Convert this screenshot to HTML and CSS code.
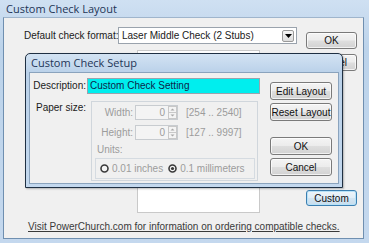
FILE: index.html
```html
<!DOCTYPE html>
<html>
<head>
<meta charset="utf-8">
<link rel="stylesheet" href="styles.css">
</head>
<body>
<div class="window">
  <div class="titlebar">Custom Check Layout</div>
  <div class="client">
    <div class="main">
      <div class="left">
        <div class="format-row">
          <span class="format-label">Default check format:</span>
          <div class="combo">
            <span class="combo-text">Laser Middle Check (2 Stubs)</span>
            <span class="drop"><svg width="7" height="4" viewBox="0 0 7 4"><path d="M0 0H7L3.5 4Z" fill="#000"/></svg></span>
          </div>
        </div>
        <div class="preview"></div>
      </div>
      <div class="right">
        <button class="btn btn-ok">OK</button>
        <button class="btn btn-cancel">Cancel</button>
        <button class="btn btn-focus btn-custom">Custom</button>
      </div>
    </div>
    <a class="link">Visit PowerChurch.com for information on ordering compatible checks.</a>
  </div>

  <div class="dialog">
    <div class="dlg-title">Custom Check Setup</div>
    <div class="dlg-body">
      <div class="form">
        <span class="lbl lbl-desc">Description:</span>
        <div class="desc-field">Custom Check Setting</div>
        <span class="lbl lbl-paper">Paper size:</span>
        <div class="paper">
          <div class="prow">
            <span class="plbl">Width:</span>
            <div class="spin"><span class="spin-val">0</span><span class="spin-btns"><svg width="9" height="13" viewBox="0 0 9 13"><rect x="0.5" y="0.5" width="8" height="12" fill="#f4f4f4" stroke="#c8c8c8"/><line x1="1" y1="6.5" x2="8" y2="6.5" stroke="#c8c8c8"/><path d="M2.5 4.5H6.5L4.5 2.5Z" fill="#a8a8a8"/><path d="M2.5 8.5H6.5L4.5 10.5Z" fill="#a8a8a8"/></svg></span></div>
            <span class="range">[254 .. 2540]</span>
          </div>
          <div class="prow">
            <span class="plbl">Height:</span>
            <div class="spin"><span class="spin-val">0</span><span class="spin-btns"><svg width="9" height="13" viewBox="0 0 9 13"><rect x="0.5" y="0.5" width="8" height="12" fill="#f4f4f4" stroke="#c8c8c8"/><line x1="1" y1="6.5" x2="8" y2="6.5" stroke="#c8c8c8"/><path d="M2.5 4.5H6.5L4.5 2.5Z" fill="#a8a8a8"/><path d="M2.5 8.5H6.5L4.5 10.5Z" fill="#a8a8a8"/></svg></span></div>
            <span class="range">[127 .. 9997]</span>
          </div>
          <span class="units-lbl">Units:</span>
          <div class="units">
            <span class="radio"><svg width="9" height="9" viewBox="0 0 9 9"><circle cx="4.5" cy="4.5" r="3.5" fill="#f4f4f4" stroke="#3a3a3a" stroke-width="1.6"/></svg>0.01 inches</span>
            <span class="radio"><svg width="9" height="9" viewBox="0 0 9 9"><circle cx="4.5" cy="4.5" r="3.5" fill="#f4f4f4" stroke="#3a3a3a" stroke-width="1.6"/><circle cx="4.5" cy="4.5" r="1.6" fill="#3a3a3a"/></svg>0.1 millimeters</span>
          </div>
        </div>
      </div>
      <div class="dlg-buttons">
        <button class="btn">Edit Layout</button>
        <button class="btn">Reset Layout</button>
        <button class="btn btn-dok">OK</button>
        <button class="btn">Cancel</button>
      </div>
    </div>
  </div>
</div>
</body>
</html>
```

FILE: styles.css
```css
* { box-sizing: border-box; }
html, body { margin: 0; padding: 0; }
body {
  width: 369px;
  height: 243px;
  overflow: hidden;
  font-family: "Liberation Sans", Arial, sans-serif;
  font-size: 10px;
  color: #1a1a1a;
}
.window {
  position: relative;
  width: 369px;
  height: 243px;
  background: linear-gradient(#cfe0f2, #bcd3ea 20%, #c4d8ee);
  padding: 0 5px 4px 3px;
  display: flex;
  flex-direction: column;
}
.titlebar {
  height: 17px;
  line-height: 17px;
  padding-left: 3px;
  font-family: "Open Sans", "Noto Sans", sans-serif;
  font-size: 11px;
  font-weight: 500;
  color: #1e3556;
}
.client {
  flex: 1;
  background: #f0f0f0;
  border: 1px solid #6f8fb0;
  border-top-color: #9fb5cc;
  padding: 9px 5px 0 20px;
  display: flex;
  flex-direction: column;
}
.main { display: flex; gap: 9px; }
.left { width: 273px; display: flex; flex-direction: column; }
.format-row { display: flex; align-items: center; height: 17px; }
.format-label { width: 94px; white-space: nowrap; }
.combo {
  width: 179px;
  height: 17px;
  background: #fff;
  border: 1px solid #9aa3ad;
  display: flex;
  align-items: center;
  justify-content: space-between;
  padding: 0 2px 0 3px;
}
.combo-text { white-space: nowrap; }
.drop {
  width: 12px;
  height: 12px;
  border: 1px solid #9a9a9a;
  border-radius: 2px;
  background: linear-gradient(#f6f6f6, #dcdcdc);
  display: flex;
  align-items: center;
  justify-content: center;
}
.preview {
  margin: 6px 0 0 113px;
  width: 123px;
  height: 163px;
  background: #fff;
  border: 1px solid #c9c9c9;
}
.right { width: 51px; display: flex; flex-direction: column; padding-top: 5px; }
.btn {
  font-family: "Liberation Sans", Arial, sans-serif;
  font-size: 10px;
  color: #111;
  border: 1px solid #7a7a7a;
  border-radius: 3px;
  background: linear-gradient(#f4f4f4, #ececec 48%, #dedede 52%, #d2d2d2);
  padding: 0;
  height: 17px;
  box-shadow: inset 0 0 0 1px rgba(255,255,255,0.7);
}
.btn-cancel { margin-top: 5px; }
.btn-custom { margin-top: 119px; height: 16px; }
.btn-focus {
  border-color: #3c7fb1;
  background: linear-gradient(#eef5fa, #e2eef7 48%, #d3e5f2 52%, #c8dded);
  box-shadow: inset 0 0 0 1px #b8e2f8;
}
.link {
  margin: 8px 0 0 4px;
  line-height: 12px;
  color: #3a3a3a;
  text-decoration: underline;
  white-space: nowrap;
}

/* dialog */
.dialog {
  position: absolute;
  left: 25px;
  top: 53px;
  width: 318px;
  height: 135px;
  border: 1px solid #1f3043;
  border-radius: 5px 5px 0 0;
  padding: 0 3px 3px 3px;
  background: linear-gradient(#d3e3f3, #bad1e9 14%, #c3d8ee);
  display: flex;
  flex-direction: column;
  box-shadow: 1px 1px 2px rgba(0,0,0,0.25);
}
.dlg-title {
  height: 18px;
  line-height: 18px;
  padding-left: 2px;
  font-family: "Open Sans", "Noto Sans", sans-serif;
  font-size: 11px;
  font-weight: 500;
  color: #1e3556;
}
.dlg-body {
  flex: 1;
  background: #f0f0f0;
  border: 1px solid #8aa3bd;
  display: flex;
  justify-content: space-between;
  padding: 5px 6px 0 0;
}
.form {
  display: grid;
  grid-template-columns: 56px 175px;
  grid-template-rows: 16px auto;
  row-gap: 7px;
  column-gap: 1px;
  align-content: start;
}
.lbl { text-align: right; white-space: nowrap; }
.lbl-desc { line-height: 16px; }
.lbl-paper { line-height: 12px; padding-top: 1px; }
.desc-field {
  width: 173px;
  height: 16px;
  background: #00eeee;
  border: 1px solid #9aa3ad;
  line-height: 14px;
  padding-left: 2px;
  color: #0d1f4a;
}
.paper {
  margin-left: 4px;
  width: 167px;
  height: 80px;
  border: 1px solid #d0d6dc;
  display: flex;
  flex-direction: column;
  gap: 5px;
  padding-top: 3px;
  color: #9c9c9c;
}
.prow {
  display: grid;
  grid-template-columns: 41px 43px auto;
  grid-template-rows: 15px;
  column-gap: 2px;
}
.plbl { text-align: right; line-height: 15px; }
.spin {
  border: 1px solid #c8ccd0;
  background: #f4f4f4;
  display: flex;
  align-items: center;
  justify-content: flex-end;
}
.spin-val { margin-right: 3px; }
.spin-btns { display: flex; }
.range { margin-left: 6px; line-height: 15px; white-space: nowrap; }
.units-lbl { margin: -1px 0 0 5px; line-height: 12px; }
.units {
  margin: -3px 0 0 3px;
  width: 160px;
  height: 21px;
  border: 1px solid #d5dbe1;
  display: flex;
  align-items: center;
  gap: 5px;
  padding-left: 4px;
  white-space: nowrap;
}
.radio { display: flex; align-items: center; gap: 3px; }
.dlg-buttons {
  width: 62px;
  display: flex;
  flex-direction: column;
  padding-top: 4px;
}
.dlg-buttons .btn { height: 18px; margin-bottom: 3px; }
.dlg-buttons .btn-dok { margin-top: 13px; }
```
